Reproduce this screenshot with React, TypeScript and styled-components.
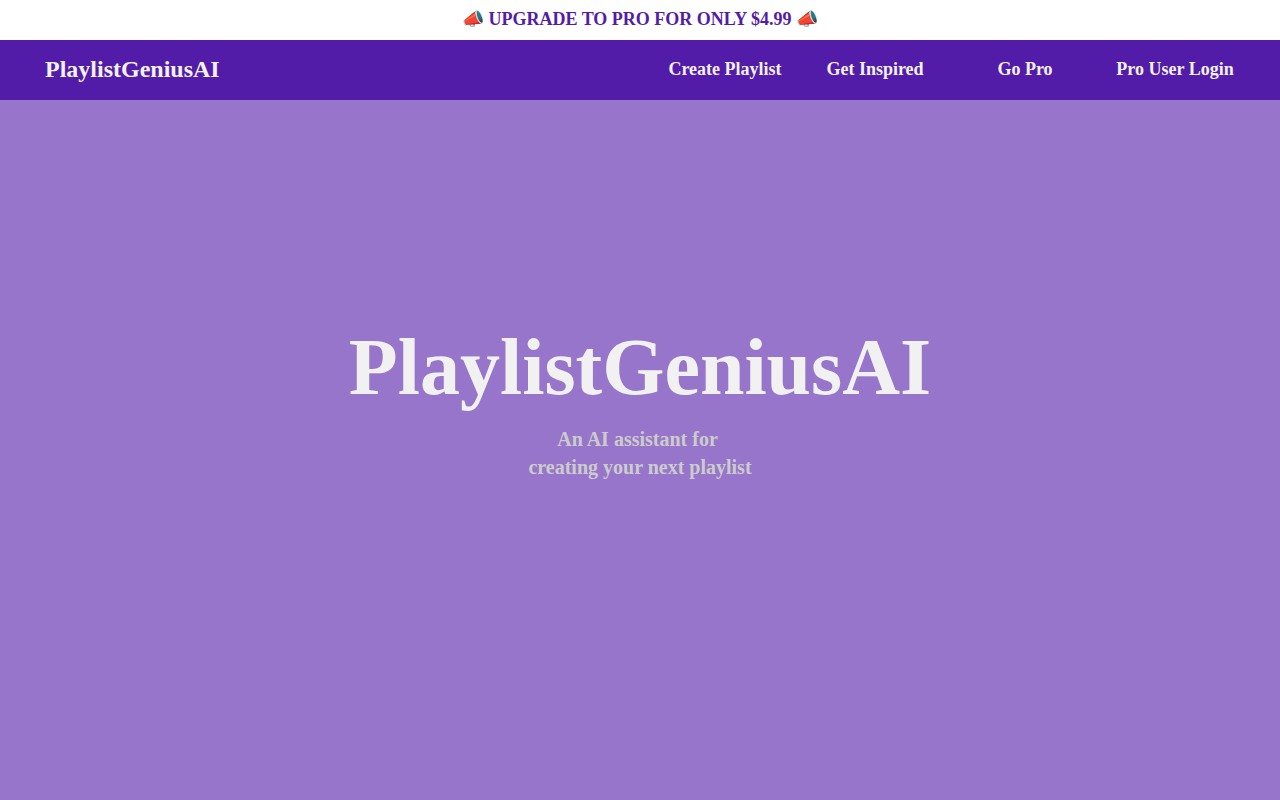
import React from "react";
import styled, { createGlobalStyle } from "styled-components";

const GlobalStyle = createGlobalStyle`
  * { box-sizing: border-box; }
  html, body { margin: 0; padding: 0; }
  body {
    background: #9775ca;
    font-family: "Times New Roman", Times, serif;
  }
`;

const Page = styled.div`
  display: flex;
  flex-direction: column;
  min-height: 100vh;
`;

const PromoBar = styled.a`
  display: flex;
  align-items: center;
  justify-content: center;
  height: 40px;
  padding-bottom: 2px;
  background: #ffffff;
  color: #521ca8;
  font-size: 18px;
  font-weight: 700;
  text-decoration: none;
`;

const NavBar = styled.header`
  display: flex;
  align-items: center;
  justify-content: space-between;
  height: 60px;
  padding: 0 30px 2px 45px;
  background: #521ca8;
`;

const Brand = styled.a`
  color: #f1f1f1;
  font-size: 24px;
  font-weight: 700;
  text-decoration: none;
`;

const NavLinks = styled.nav`
  display: flex;
`;

const NavLink = styled.a`
  width: 150px;
  color: #f1f1f1;
  font-size: 18px;
  font-weight: 700;
  text-align: center;
  text-decoration: none;
`;

const Hero = styled.main`
  display: flex;
  flex: 1;
  flex-direction: column;
  align-items: center;
  justify-content: center;
  padding-bottom: 98px;
`;

const Title = styled.h1`
  margin: 0;
  color: #f1f1f1;
  font-size: 80px;
  line-height: 92px;
`;

const Tagline = styled.h2`
  margin: 12px 0 0;
  color: #cccccc;
  font-size: 20px;
  line-height: 28px;
  text-align: center;
`;

const links = [
  { label: "Create Playlist", href: "#create" },
  { label: "Get Inspired", href: "#inspired" },
  { label: "Go Pro", href: "#pro" },
  { label: "Pro User Login", href: "#login" },
];

export default function App() {
  return (
    <Page>
      <GlobalStyle />
      <PromoBar href="#pro">📣 UPGRADE TO PRO FOR ONLY $4.99 📣</PromoBar>
      <NavBar>
        <Brand href="#home">PlaylistGeniusAI</Brand>
        <NavLinks>
          {links.map(({ label, href }) => (
            <NavLink key={href} href={href}>
              {label}
            </NavLink>
          ))}
        </NavLinks>
      </NavBar>
      <Hero>
        <Title>PlaylistGeniusAI</Title>
        <Tagline>
          An AI assistant for&nbsp;
          <br />
          creating your next playlist
        </Tagline>
      </Hero>
    </Page>
  );
}
